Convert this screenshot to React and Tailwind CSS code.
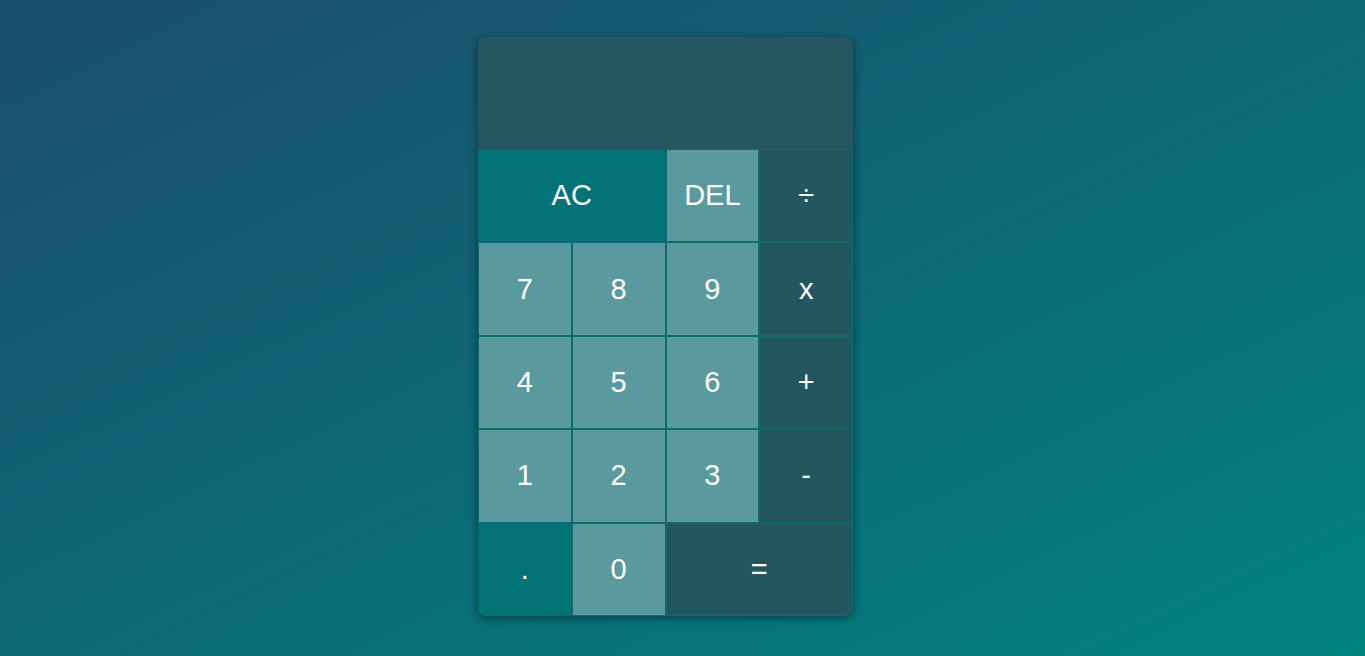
import React from "react";

const light = "bg-[#5a999e]";
const dark = "bg-[#24565e]";
const teal = "bg-[#047377]";

function Btn({ children, className = "" }) {
  return (
    <button
      className={`flex items-center justify-center border border-[#0c6b6e] text-white text-[29px] leading-none ${className}`}
      style={{ fontFamily: '"Liberation Sans", Arial, sans-serif' }}
    >
      {children}
    </button>
  );
}

export default function App() {
  return (
    <div className="min-h-[656px] h-screen w-full bg-[linear-gradient(to_bottom_right,#1b4d6b,#008380)] flex justify-center pr-[34px] pt-[37px]">
      <div className="w-[375px] h-[579px] grid grid-cols-4 grid-rows-[112px_repeat(5,93.4px)] rounded-lg overflow-hidden shadow-[0_2px_10px_rgba(0,0,0,0.45)] self-start">
        <div className="col-span-4 bg-[#245760]"></div>
        <Btn className={`col-span-2 ${teal}`}>AC</Btn>
        <Btn className={light}>DEL</Btn>
        <Btn className={dark}>÷</Btn>
        <Btn className={light}>7</Btn>
        <Btn className={light}>8</Btn>
        <Btn className={light}>9</Btn>
        <Btn className={dark}>x</Btn>
        <Btn className={light}>4</Btn>
        <Btn className={light}>5</Btn>
        <Btn className={light}>6</Btn>
        <Btn className={dark}>+</Btn>
        <Btn className={light}>1</Btn>
        <Btn className={light}>2</Btn>
        <Btn className={light}>3</Btn>
        <Btn className={dark}>-</Btn>
        <Btn className={teal}>.</Btn>
        <Btn className={light}>0</Btn>
        <Btn className={`col-span-2 ${dark}`}>=</Btn>
      </div>
    </div>
  );
}
